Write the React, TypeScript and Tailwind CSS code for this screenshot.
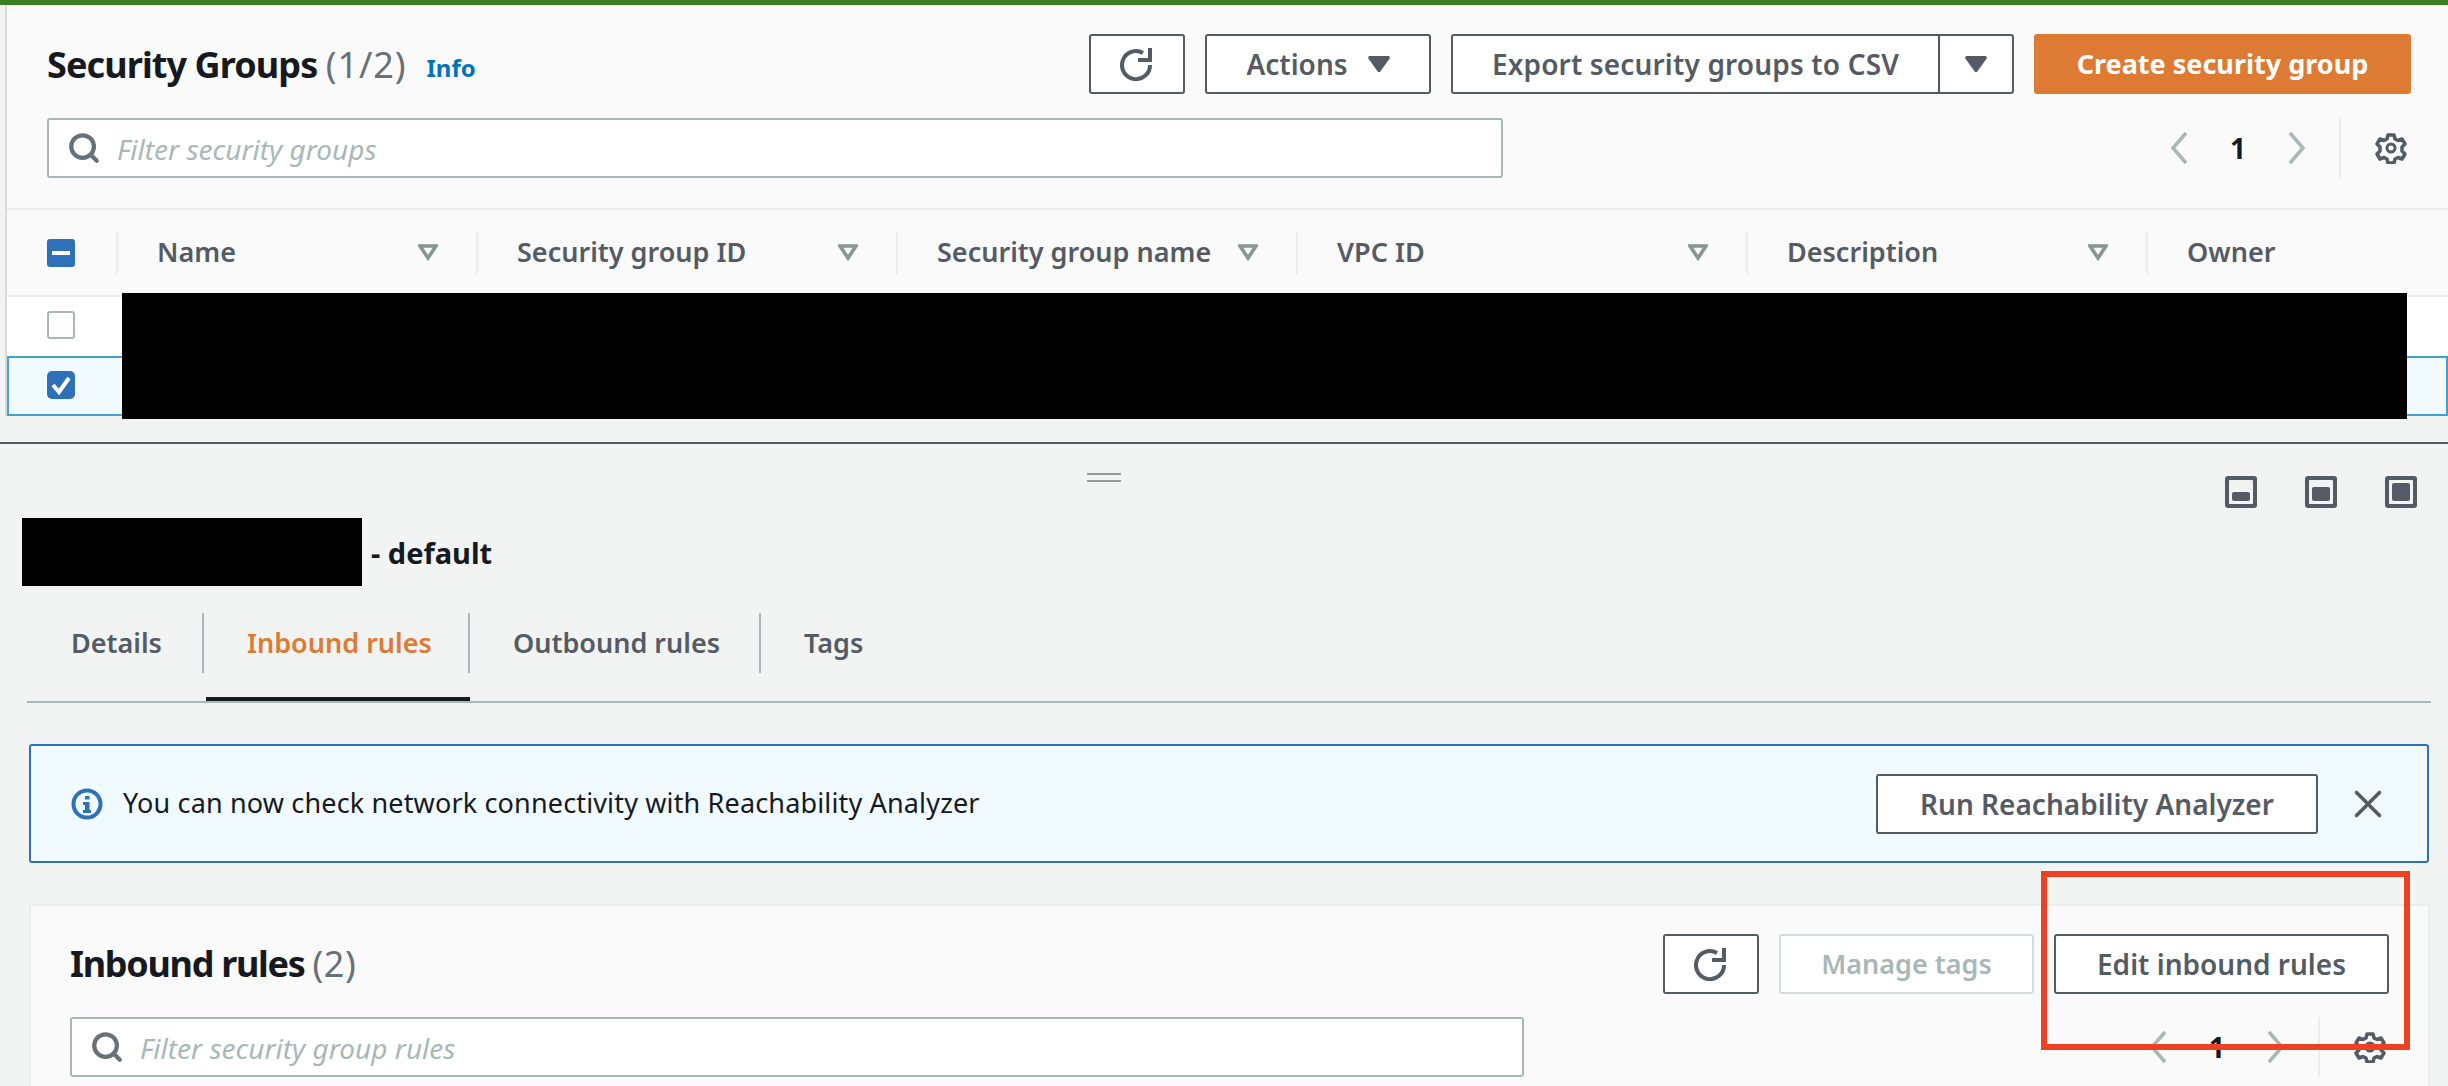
import { Search, X } from 'lucide-react';

const font = { fontFamily: '"Noto Sans", sans-serif' };

function RefreshIcon() {
  return (
    <svg width="34" height="34" viewBox="0 0 34 34" fill="none" stroke="#545b64" strokeWidth="4">
      <path d="M30 18A14 14 0 1 1 23 6" />
      <path d="M30 1v12H18" />
    </svg>
  );
}

function Caret() {
  return (
    <svg width="22" height="16" viewBox="0 0 22 16" fill="#545b64">
      <path d="M1 0h20l1 2-10 14h-2L0 2z" />
    </svg>
  );
}

function FilterIcon() {
  return (
    <svg width="20" height="17" viewBox="0 0 20 17" fill="none" stroke="#879596" strokeWidth="3.500">
      <path d="M2 2h16l-8 12z" />
    </svg>
  );
}

function Gear() {
  return (
    <svg width="32" height="32" viewBox="0 0 32 32" fill="none" stroke="#545b64">
      <circle cx="16" cy="16" r="4" strokeWidth="3" />
      <path d="M13 3h6l1 4 3 1.500 4-1.500 3 5-3 3v4l3 3-3 5-4-1.500-3 1.500-1 4h-6l-1-4-3-1.500-4 1.500-3-5 3-3v-4l-3-3 3-5 4 1.500 3-1.500z" strokeWidth="3.500" strokeLinejoin="round" />
    </svg>
  );
}

function Pager({ gapClass }: { gapClass: string }) {
  return (
    <div className={`flex items-center ${gapClass}`}>
      <svg width="20" height="34" viewBox="0 0 20 34" fill="none" stroke="#aab7b8" strokeWidth="3.500">
        <path d="M17 2L4 17l13 15" />
      </svg>
      <span className="w-[20px] text-center text-[28px] font-bold text-[#16191f]">1</span>
      <svg width="20" height="34" viewBox="0 0 20 34" fill="none" stroke="#aab7b8" strokeWidth="3.500">
        <path d="M3 2l13 15L3 32" />
      </svg>
    </div>
  );
}

function Btn({ children, className }: { children: React.ReactNode; className: string }) {
  return (
    <button type="button" className={`flex items-center justify-center rounded-[3px] border-2 border-[#545b64] bg-white text-[28px] font-semibold text-[#545b64] ${className}`}>
      {children}
    </button>
  );
}

function SearchBox({ placeholder, className }: { placeholder: string; className: string }) {
  return (
    <div className={`flex h-[60px] items-center rounded-[3px] border-2 border-[#aab7b8] bg-white pl-[18px] ${className}`}>
      <Search size={34} strokeWidth={3} color="#687078" />
      <span className="ml-[16px] pt-[2px] text-[28px] italic text-[#aab7b8]">{placeholder}</span>
    </div>
  );
}

function Column({ label, className, filter = true }: { label: string; className: string; filter?: boolean }) {
  return (
    <div className={`flex h-[42px] items-center justify-between border-l-2 border-[#eaeded] pl-[39px] pr-[38px] text-[27px] font-semibold text-[#545b64] ${className}`}>
      <span>{label}</span>
      {filter && <FilterIcon />}
    </div>
  );
}

function ViewIcon({ children }: { children: React.ReactNode }) {
  return (
    <div className="h-[32px] w-[32px] rounded-[3px] bg-[#545b64] p-[4px]">
      <div className="flex h-[24px] w-[24px] flex-col justify-end rounded-[1px] bg-[#f2f3f3] p-[3px]">{children}</div>
    </div>
  );
}

function Tab({ label, className }: { label: string; className: string }) {
  return (
    <div className={`flex h-[60px] items-center text-[27px] font-semibold ${className}`}>{label}</div>
  );
}

export default function App() {
  return (
    <div className="relative h-[1086px] w-[2448px] overflow-hidden bg-[#f2f3f3]" style={font}>
      {/* top table panel */}
      <div className="h-[5px] bg-[#3b7f22]" />
      <div className="ml-[5px] h-[437px]">
        <div className="border-l-2 border-[#d5dbdb]">
          <div className="bg-[#fafafa]">
            <div className="flex h-[205px] flex-col border-b-2 border-[#eaeded] pl-[40px]">
              <div className="mt-[29px] flex h-[60px] items-center">
                <h1 className="pt-[2px] text-[36px] font-bold tracking-[-0.9px] text-[#16191f]">
                  Security Groups <span className="font-normal tracking-[0.9px] text-[#687078]">(1/2)</span>
                </h1>
                <span className="ml-[20px] mt-[8px] text-[24px] font-bold text-[#0073bb]">Info</span>
                <div className="ml-auto mr-[37px] flex gap-[20px]">
                  <Btn className="h-[60px] w-[96px]"><RefreshIcon /></Btn>
                  <Btn className="h-[60px] w-[226px] gap-[20px]">Actions <Caret /></Btn>
                  <div className="flex h-[60px] w-[563px] rounded-[3px] border-2 border-[#545b64] bg-white text-[28px] font-semibold tracking-[0.15px] text-[#545b64]">
                    <div className="flex w-[487px] items-center justify-center border-r-2 border-[#545b64]">Export security groups to CSV</div>
                    <div className="flex flex-1 items-center justify-center"><Caret /></div>
                  </div>
                  <button type="button" className="h-[60px] w-[377px] rounded-[3px] bg-[#dd7a33] text-[27px] font-bold text-white">Create security group</button>
                </div>
              </div>
              <div className="mt-[24px] flex items-center">
                <SearchBox placeholder="Filter security groups" className="w-[1456px]" />
                <div className="ml-auto flex items-center">
                  <Pager gapClass="gap-[39px]" />
                  <div className="ml-[32px] flex h-[60px] items-center border-l-2 border-[#eaeded] pl-[34px] pr-[41px]"><Gear /></div>
                </div>
              </div>
            </div>
            <div className="flex h-[85px] items-center">
              <div className="flex h-[42px] w-[109px] items-center pl-[40px]">
                <div className="flex h-[28px] w-[28px] items-center justify-center rounded-[3px] bg-[#2f71b8]">
                  <div className="h-[4px] w-[18px] bg-white" />
                </div>
              </div>
              <Column label="Name" className="w-[360px]" />
              <Column label="Security group ID" className="w-[420px]" />
              <Column label="Security group name" className="w-[400px]" />
              <Column label="VPC ID" className="w-[450px]" />
              <Column label="Description" className="w-[400px]" />
              <Column label="Owner" className="flex-1" filter={false} />
            </div>
          </div>
          <div className="flex h-[61px] items-center border-t-2 border-[#eaeded] bg-white pb-[3px] pl-[40px]">
            <div className="h-[28px] w-[28px] rounded-[3px] border-2 border-[#aab7b8] bg-white" />
          </div>
          <div className="flex h-[60px] items-center border-2 border-[#44a0d0] bg-[#f1faff] pb-[3px] pl-[38px]">
            <div className="flex h-[28px] w-[28px] items-center justify-center rounded-[5px] bg-[#2f71b8]">
              <svg width="20" height="22" viewBox="0 0 20 22" fill="none" stroke="#fff" strokeWidth="4"><path d="M2 11l6 7L18 4" /></svg>
            </div>
          </div>
        </div>
      </div>
      <div className="absolute left-[122px] top-[293px] h-[126px] w-[2285px] bg-black" />

      {/* split panel */}
      <div className="h-[644px] border-t-2 border-[#545b64]">
        <div className="flex h-[50px] items-center justify-end gap-[48px] pr-[31px] pt-[45px]">
          <ViewIcon><div className="h-[9px] rounded-[2px] bg-[#545b64]" /></ViewIcon>
          <ViewIcon><div className="h-[14px] rounded-[2px] bg-[#545b64]" /></ViewIcon>
          <ViewIcon><div className="h-[18px] rounded-[2px] bg-[#545b64]" /></ViewIcon>
        </div>
        <div className="absolute left-[1087px] top-[473px] h-[9px] w-[34px] border-y-2 border-[#999]" />
        <div className="ml-[22px] mt-[24px] flex h-[68px] items-center">
          <div className="h-[68px] w-[340px] bg-black" />
          <span className="ml-[9px] mt-[2px] text-[29px] font-bold text-[#16191f]">- default</span>
        </div>
        <div className="ml-[27px] mr-[17px] mt-[27px] flex h-[90px] items-start border-b-2 border-[#aab7b8]">
          <Tab label="Details" className="w-[177px] border-r-2 border-[#aab7b8] pl-[44px] text-[#545b64]" />
          <div className="ml-[2px] h-[88px] w-[264px] border-b-4 border-[#16191f]">
            <Tab label="Inbound rules" className="w-[264px] border-r-2 border-[#aab7b8] pl-[41px] text-[#dd7a33]" />
          </div>
          <Tab label="Outbound rules" className="w-[291px] border-r-2 border-[#aab7b8] pl-[43px] text-[#545b64]" />
          <Tab label="Tags" className="pl-[43px] text-[#545b64]" />
        </div>
        <div className="ml-[29px] mr-[19px] mt-[41px] flex h-[119px] items-center rounded-[3px] border-2 border-[#2f71b8] bg-[#f1faff] pl-[40px] pr-[36px]">
          <svg width="32" height="32" viewBox="0 0 32 32" fill="#2f71b8">
            <circle cx="16" cy="16" r="13.500" fill="none" stroke="#2f71b8" strokeWidth="4" />
            <path d="M14 8h4.500v3.500H14zM12 14h6.500v8H20v3h-8v-3h2v-5h-2z" />
          </svg>
          <span className="ml-[20px] text-[27px] tracking-[0.15px] text-[#16191f]">You can now check network connectivity with Reachability Analyzer</span>
          <Btn className="ml-auto h-[60px] w-[442px]">Run Reachability Analyzer</Btn>
          <X className="ml-[27px]" size={46} strokeWidth={1.9} color="#545b64" />
        </div>
        <div className="ml-[29px] mr-[18px] mt-[41px] h-[300px] rounded-t-[3px] border-x-2 border-t-2 border-[#eaeded] bg-[#fafafa] pl-[39px]">
          <div className="mt-[28px] flex h-[60px] items-center">
            <h2 className="text-[36px] font-bold tracking-[-1.3px] text-[#16191f]">
              Inbound rules <span className="font-normal tracking-[0.5px] text-[#687078]">(2)</span>
            </h2>
            <div className="ml-auto mr-[39px] flex gap-[20px]">
              <Btn className="h-[60px] w-[96px]"><RefreshIcon /></Btn>
              <button type="button" className="h-[60px] w-[255px] rounded-[3px] border-2 border-[#d5dbdb] bg-white text-[27px] font-semibold text-[#aab7b8]">Manage tags</button>
              <Btn className="h-[60px] w-[335px]">Edit inbound rules</Btn>
            </div>
          </div>
          <div className="mt-[23px] flex items-center">
            <SearchBox placeholder="Filter security group rules" className="w-[1454px]" />
            <div className="ml-auto flex items-center">
              <Pager gapClass="gap-[39px]" />
              <div className="ml-[32px] flex h-[60px] items-center border-l-2 border-[#eaeded] pl-[34px] pr-[42px]"><Gear /></div>
            </div>
          </div>
        </div>
      </div>

      {/* callout drawn on the screenshot */}
      <div className="absolute left-[2041px] top-[871px] h-[179px] w-[369px] border-[6px] border-[#ee4023]" />
    </div>
  );
}
